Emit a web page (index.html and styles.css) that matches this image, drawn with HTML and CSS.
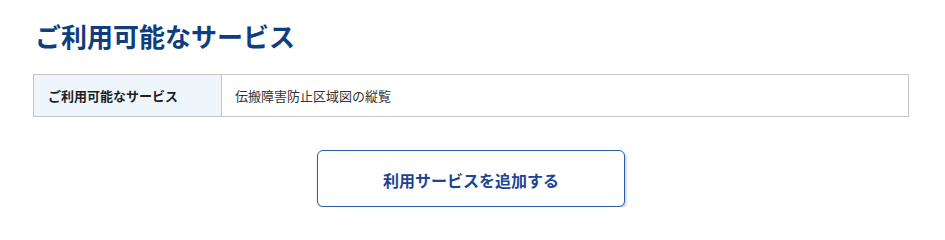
FILE: index.html
```html
<!DOCTYPE html>
<html lang="ja">
<head>
<meta charset="utf-8">
<title>ご利用可能なサービス</title>
<link rel="stylesheet" href="styles.css">
</head>
<body>
<main class="page">
  <h1 class="title">ご利用可能なサービス</h1>
  <table class="info">
    <tr>
      <th class="info-head">ご利用可能なサービス</th>
      <td class="info-body">伝搬障害防止区域図の縦覧</td>
    </tr>
  </table>
  <div class="actions">
    <button class="add-btn" type="button">利用サービスを追加する</button>
  </div>
</main>
</body>
</html>
```

FILE: styles.css
```css
html, body {
  margin: 0;
  padding: 0;
  background: #ffffff;
}
body {
  font-family: "Noto Sans CJK JP", "Noto Sans", sans-serif;
  color: #333333;
}
.page {
  padding: 18px 36px 0 33px;
}
.title {
  margin: 0 0 20px 2px;
  font-size: 26px;
  line-height: 36px;
  font-weight: 700;
  color: #0f3e7c;
}
.info {
  width: 100%;
  border-collapse: collapse;
  border: 1px solid #c6c6c6;
}
.info-head {
  width: 188px;
  box-sizing: border-box;
  padding: 0 0 0 14px;
  height: 42px;
  background: #eef6fb;
  border-right: 1px solid #c6c6c6;
  text-align: left;
  font-size: 13px;
  font-weight: 700;
  color: #1e1e1e;
}
.info-body {
  padding: 0 0 0 13px;
  font-size: 13px;
  color: #333333;
}
.actions {
  display: flex;
  justify-content: center;
  padding-top: 33px;
}
.add-btn {
  width: 308px;
  height: 57px;
  box-sizing: border-box;
  background: #ffffff;
  border: 1px solid #2a5cb0;
  border-radius: 6px;
  box-shadow: 1px 2px 3px rgba(0, 0, 0, 0.25);
  font-family: "Noto Sans CJK JP", "Noto Sans", sans-serif;
  font-size: 16px;
  font-weight: 700;
  color: #1d4593;
  padding: 3px 0 0 0;
  cursor: pointer;
}
```
